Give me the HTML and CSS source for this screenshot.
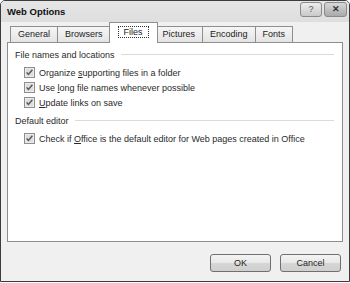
FILE: index.html
```html
<!DOCTYPE html>
<html lang="en">
<head>
    <meta charset="UTF-8">
    <title>Web Options</title>
    <link rel="stylesheet" href="styles.css">
</head>
<body>
    <div class="dialog">
        <div class="titlebar">
            <span class="title">Web Options</span>
            <div class="controls">
                <span class="ctrl help">?</span>
                <span class="ctrl close">&#x2715;</span>
            </div>
        </div>

        <div class="tabs">
            <span class="tab">General</span>
            <span class="tab">Browsers</span>
            <span class="tab active"><span class="focus">Files</span></span>
            <span class="tab">Pictures</span>
            <span class="tab">Encoding</span>
            <span class="tab">Fonts</span>
        </div>

        <div class="panel">
            <div class="group-title"><span>File names and locations</span></div>
            <div class="options">
                <label class="option">
                    <svg class="check" width="11" height="11" viewBox="0 0 11 11"><rect x="0.5" y="0.5" width="10" height="10" fill="#ececec" stroke="#8e8e8e"/><rect x="2" y="2" width="7" height="7" fill="#dedede"/><path d="M2.6 5.4 L4.4 7.4 L8.4 2.8" fill="none" stroke="#555" stroke-width="1.4"/></svg>
                    <span>Organize <u>s</u>upporting files in a folder</span>
                </label>
                <label class="option">
                    <svg class="check" width="11" height="11" viewBox="0 0 11 11"><rect x="0.5" y="0.5" width="10" height="10" fill="#ececec" stroke="#8e8e8e"/><rect x="2" y="2" width="7" height="7" fill="#dedede"/><path d="M2.6 5.4 L4.4 7.4 L8.4 2.8" fill="none" stroke="#555" stroke-width="1.4"/></svg>
                    <span>Use <u>l</u>ong file names whenever possible</span>
                </label>
                <label class="option">
                    <svg class="check" width="11" height="11" viewBox="0 0 11 11"><rect x="0.5" y="0.5" width="10" height="10" fill="#ececec" stroke="#8e8e8e"/><rect x="2" y="2" width="7" height="7" fill="#dedede"/><path d="M2.6 5.4 L4.4 7.4 L8.4 2.8" fill="none" stroke="#555" stroke-width="1.4"/></svg>
                    <span><u>U</u>pdate links on save</span>
                </label>
            </div>

            <div class="group-title"><span>Default editor</span></div>
            <div class="options">
                <label class="option">
                    <svg class="check" width="11" height="11" viewBox="0 0 11 11"><rect x="0.5" y="0.5" width="10" height="10" fill="#ececec" stroke="#8e8e8e"/><rect x="2" y="2" width="7" height="7" fill="#dedede"/><path d="M2.6 5.4 L4.4 7.4 L8.4 2.8" fill="none" stroke="#555" stroke-width="1.4"/></svg>
                    <span>Check if <u>O</u>ffice is the default editor for Web pages created in Office</span>
                </label>
            </div>
        </div>

        <div class="buttons">
            <button class="btn">OK</button>
            <button class="btn">Cancel</button>
        </div>
    </div>
</body>
</html>
```

FILE: styles.css
```css
body {
    margin: 0;
    background: #ffffff;
    font-family: "Liberation Sans", Arial, sans-serif;
    font-size: 9px;
    color: #2a2a2a;
}
.dialog {
    width: 350px;
    height: 282px;
    box-sizing: border-box;
    border: 1px solid #3c3c3c;
    border-radius: 5px 5px 0 0;
    background: #f0f0f0;
    display: flex;
    flex-direction: column;
}
.titlebar {
    height: 21px;
    display: flex;
    justify-content: space-between;
    align-items: center;
    padding: 0 2px 0 6px;
    background: linear-gradient(#e6e6e6, #dedede);
    border-radius: 4px 4px 0 0;
}
.title {
    font-weight: bold;
    font-size: 9.5px;
    color: #111;
}
.controls {
    display: flex;
    gap: 2px;
    margin-top: -4px;
}
.ctrl {
    height: 13px;
    border: 1px solid #8a8a8a;
    border-radius: 3px;
    background: linear-gradient(#ededed, #c9c9c9);
    color: #555;
    font-size: 9px;
    line-height: 13px;
    text-align: center;
}
.help {
    width: 20px;
}
.close {
    width: 21px;
    background: linear-gradient(#d8d8d8, #a9a9a9);
    color: #333;
    font-weight: bold;
}
.tabs {
    display: flex;
    align-items: flex-end;
    height: 20px;
    padding-left: 9px;
    position: relative;
    z-index: 1;
}
.tab {
    height: 15px;
    line-height: 15px;
    padding: 0 7px;
    border: 1px solid #8e8e8e;
    border-bottom: none;
    border-left-width: 0;
    background: linear-gradient(#f6f6f6, #e4e4e4);
    color: #222;
}
.tab:first-child {
    border-left-width: 1px;
}
.tab.active {
    height: 20px;
    line-height: 18px;
    margin: 0 -2px -1px -2px;
    padding: 0 8px;
    border-left-width: 1px;
    background: #ffffff;
    position: relative;
}
.focus {
    border: 1px dotted #333;
    padding: 0 5px;
}
.panel {
    height: 200px;
    box-sizing: border-box;
    margin: 0 6px;
    padding: 5px 7px 0 7px;
    border: 1px solid #8e8e8e;
    background: #ffffff;
}
.group-title {
    display: flex;
    align-items: center;
    gap: 6px;
    height: 13px;
    margin-top: 4px;
    margin-right: 1px;
}
.group-title:first-child {
    margin-top: 0;
}
.group-title::after {
    content: "";
    flex: 1;
    border-top: 1px solid #dadada;
}
.options {
    margin-top: 4px;
    padding-left: 9px;
}
.option {
    display: flex;
    align-items: center;
    gap: 4px;
    height: 15px;
}
.check {
    flex: none;
}
.buttons {
    display: flex;
    justify-content: flex-end;
    gap: 9px;
    padding: 12px 8px 0 0;
}
.btn {
    width: 61px;
    height: 18px;
    padding: 0;
    border: 1px solid #707070;
    border-radius: 3px;
    background: linear-gradient(#f4f4f4 0%, #e8e8e8 50%, #d6d6d6 51%, #cfcfcf 100%);
    font-family: "Liberation Sans", Arial, sans-serif;
    font-size: 9px;
    color: #1e1e1e;
}
```
